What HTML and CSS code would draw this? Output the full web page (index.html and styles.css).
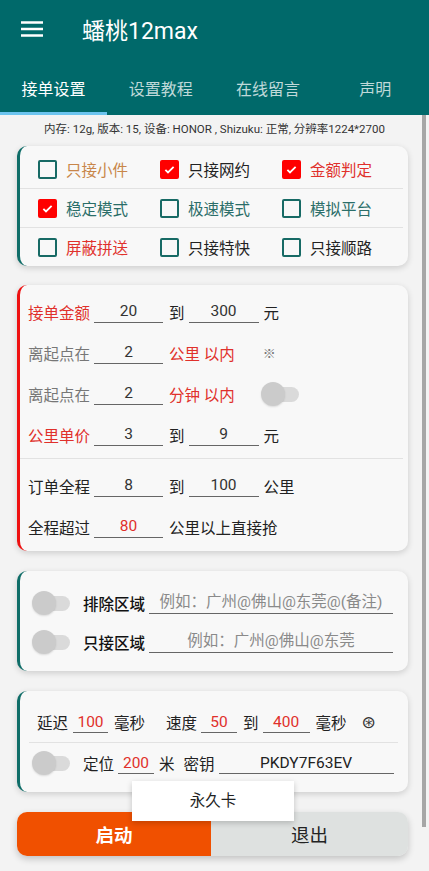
FILE: index.html
```html
<!DOCTYPE html>
<html lang="zh-CN">
<head>
    <meta charset="UTF-8">
    <meta name="viewport" content="width=device-width, initial-scale=1.0">
    <title>蟠桃12max</title>
    <link rel="stylesheet" href="styles.css">
</head>
<body>

<header class="appbar">
    <div class="toolbar">
        <svg class="menu-icon" width="22" height="16" viewBox="0 0 22 16">
            <path d="M0 1.5h22M0 8h22M0 14.5h22" stroke="#fff" stroke-width="2.4"/>
        </svg>
        <span class="title">蟠桃12max</span>
    </div>
    <nav class="tabs">
        <a class="tab active">接单设置</a>
        <a class="tab">设置教程</a>
        <a class="tab">在线留言</a>
        <a class="tab">声明</a>
    </nav>
</header>

<main class="content">
    <p class="info">内存: 12g, 版本: 15, 设备: HONOR , Shizuku: 正常, 分辨率1224*2700</p>

    <!-- 开关选项 -->
    <section class="card card-teal checks">
        <div class="check-row">
            <label class="check"><span class="box"></span><span class="c-orange">只接小件</span></label>
            <label class="check"><span class="box on"></span><span>只接网约</span></label>
            <label class="check"><span class="box on"></span><span class="c-red">金额判定</span></label>
        </div>
        <div class="divider"></div>
        <div class="check-row">
            <label class="check"><span class="box on"></span><span class="c-teal">稳定模式</span></label>
            <label class="check"><span class="box"></span><span class="c-teal">极速模式</span></label>
            <label class="check"><span class="box"></span><span class="c-teal">模拟平台</span></label>
        </div>
        <div class="divider"></div>
        <div class="check-row">
            <label class="check"><span class="box"></span><span class="c-red">屏蔽拼送</span></label>
            <label class="check"><span class="box"></span><span>只接特快</span></label>
            <label class="check"><span class="box"></span><span>只接顺路</span></label>
        </div>
    </section>

    <!-- 金额与距离 -->
    <section class="card card-red ranges">
        <div class="field-row">
            <span class="label c-red">接单金额</span>
            <input class="num" value="20">
            <span class="to">到</span>
            <input class="num num2" value="300">
            <span>元</span>
        </div>
        <div class="field-row">
            <span class="label c-gray">离起点在</span>
            <input class="num" value="2">
            <span class="c-red">公里 以内</span>
            <span class="mark">※</span>
        </div>
        <div class="field-row">
            <span class="label c-gray">离起点在</span>
            <input class="num" value="2">
            <span class="c-red">分钟 以内</span>
            <span class="switch row-switch"><span class="thumb"></span></span>
        </div>
        <div class="field-row">
            <span class="label c-red">公里单价</span>
            <input class="num" value="3">
            <span class="to">到</span>
            <input class="num num2" value="9">
            <span>元</span>
        </div>
        <div class="divider wide"></div>
        <div class="field-row">
            <span class="label">订单全程</span>
            <input class="num" value="8">
            <span class="to">到</span>
            <input class="num num2" value="100">
            <span>公里</span>
        </div>
        <div class="field-row">
            <span class="label">全程超过</span>
            <input class="num red" value="80">
            <span>公里以上直接抢</span>
        </div>
    </section>

    <!-- 区域 -->
    <section class="card card-teal areas">
        <div class="area-row">
            <span class="switch"><span class="thumb"></span></span>
            <span class="area-label">排除区域</span>
            <input class="area-input" placeholder="例如：广州@佛山@东莞@(备注)">
        </div>
        <div class="area-row">
            <span class="switch"><span class="thumb"></span></span>
            <span class="area-label">只接区域</span>
            <input class="area-input" placeholder="例如：广州@佛山@东莞">
        </div>
    </section>

    <!-- 延迟 / 定位 / 密钥 -->
    <section class="card card-teal timing">
        <div class="time-row">
            <span>延迟</span>
            <input class="small red w35 ml5" value="100">
            <span class="ml6">毫秒</span>
            <span class="ml21">速度</span>
            <input class="small red w36 ml4" value="50">
            <span class="ml6">到</span>
            <input class="small red w47 ml4" value="400">
            <span class="ml6">毫秒</span>
            <span class="star">⊛</span>
        </div>
        <div class="divider inner"></div>
        <div class="time-row second">
            <span class="switch"><span class="thumb"></span></span>
            <span class="ml13">定位</span>
            <input class="small red w36 ml4" value="200">
            <span class="ml5">米</span>
            <span class="ml9">密钥</span>
            <input class="small key ml4" value="PKDY7F63EV">
        </div>
        <div class="popup">永久卡</div>
    </section>

    <div class="actions">
        <button class="btn start">启动</button>
        <button class="btn quit">退出</button>
    </div>
</main>

<div class="scrollbar"></div>

</body>
</html>
```

FILE: styles.css
```css
body {
    margin: 0;
    font-family: Roboto, "Noto Sans CJK SC", sans-serif;
    background-color: #f3f3f3;
    color: #222;
    width: 429px;
    height: 871px;
    overflow: hidden;
}
.appbar {
    background: #00696a;
    color: #fff;
}
.toolbar {
    height: 60px;
    display: flex;
    align-items: center;
    padding-left: 21px;
}
.menu-icon {
    margin-top: -3px;
}
.title {
    margin-left: 39px;
    font-size: 23px;
    margin-top: -2px;
}
.tabs {
    display: flex;
    height: 55px;
}
.tab {
    flex: 1;
    display: flex;
    align-items: center;
    justify-content: center;
    font-size: 16px;
    color: rgba(255, 255, 255, 0.75);
    border-bottom: 3px solid transparent;
    padding-top: 3px;
}
.tab.active {
    color: #fff;
    border-bottom-color: #6cc4ef;
}
.content {
    padding: 0 21px 0 17px;
}
.info {
    margin: 6px 0 0;
    font-size: 11.5px;
    line-height: 16px;
    color: #333;
    text-align: center;
    padding-left: 4px;
}
.card {
    position: relative;
    background: #f8f8f8;
    border-radius: 10px;
    box-shadow: 0 2px 6px rgba(0, 0, 0, 0.16);
    border-left: 3px solid #0f6d68;
}
.card-red {
    border-left-color: #ee1111;
}
.divider {
    height: 1px;
    background: #e2e2e2;
    margin: 0 5px 0 0;
}
.c-red { color: #e0302b; }
.c-orange { color: #c8864a; }
.c-teal { color: #2b6e69; }
.c-gray { color: #777; }

/* checkboxes */
.checks {
    margin-top: 9px;
    padding: 4px 0 0;
    height: 116px;
}
.check-row {
    display: grid;
    grid-template-columns: 122px 122px 122px;
    height: 38px;
    padding-left: 18px;
    align-items: center;
}
.check {
    display: flex;
    align-items: center;
    font-size: 15.5px;
}
.box {
    width: 15px;
    height: 15px;
    border: 2.5px solid #176a65;
    border-radius: 2px;
    margin-right: 9px;
}
.box.on {
    border-color: #ff0000;
    background: #ff0000 url("data:image/svg+xml;utf8,<svg xmlns='http://www.w3.org/2000/svg' viewBox='0 0 20 20'><path d='M4.5 10.5l3.5 3.5 7.5-7.5' fill='none' stroke='white' stroke-width='2.4'/></svg>") center/100% no-repeat;
}

/* ranges */
.ranges {
    margin-top: 19px;
    padding: 6px 0 4px;
}
.field-row {
    display: flex;
    align-items: center;
    height: 41px;
    padding-left: 8px;
    font-size: 15.5px;
}
.label {
    width: 62px;
    margin-right: 4px;
}
.num {
    width: 69px;
    height: 21px;
    margin-right: 6px;
    padding: 0;
    border: none;
    border-bottom: 1.5px solid #666;
    background: transparent;
    font: 15.5px Roboto, "Noto Sans CJK SC", sans-serif;
    color: #333;
    text-align: center;
    outline: none;
}
.num2 {
    width: 70px;
    margin-right: 5px;
}
.to {
    margin-right: 4px;
}
.red {
    color: #e0302b;
}
.mark {
    margin-left: 28px;
    font-size: 13px;
    color: #777;
}
.divider.wide {
    margin: 3px 5px 6px 0;
}
.switch {
    position: relative;
    display: inline-block;
    width: 38px;
    height: 24px;
    flex-shrink: 0;
}
.switch::before {
    content: "";
    position: absolute;
    right: 0;
    top: 5px;
    width: 28px;
    height: 15px;
    border-radius: 8px;
    background: #dadada;
}
.thumb {
    position: absolute;
    left: 0;
    top: 0;
    width: 24px;
    height: 24px;
    border-radius: 50%;
    background: #cbcbcb;
    box-shadow: 0 1px 2px rgba(0, 0, 0, 0.12);
}
.row-switch {
    margin-left: 26px;
}

/* areas */
.areas {
    margin-top: 20px;
    padding: 12px 0 10px;
}
.area-row {
    display: flex;
    align-items: center;
    height: 39px;
    padding-left: 12px;
}
.area-label {
    margin-left: 13px;
    width: 62px;
    font-size: 15.5px;
    font-weight: 500;
    color: #111;
}
.area-input {
    margin-left: 4px;
    width: 244px;
    height: 22px;
    padding: 0;
    border: none;
    border-bottom: 1.5px solid #666;
    background: transparent;
    font: 15.5px Roboto, "Noto Sans CJK SC", sans-serif;
    text-align: center;
    outline: none;
}
.area-input::placeholder {
    color: #8a8a8a;
}

/* timing */
.timing {
    margin-top: 20px;
    padding: 11px 0 9px;
}
.time-row {
    display: flex;
    align-items: center;
    height: 40px;
    padding-left: 17px;
    font-size: 15.5px;
}
.time-row.second {
    padding-left: 12px;
}
.divider.inner {
    margin: 0 10px 0 9px;
}
.small {
    height: 21px;
    padding: 0;
    border: none;
    border-bottom: 1.5px solid #666;
    background: transparent;
    font: 15.5px Roboto, "Noto Sans CJK SC", sans-serif;
    text-align: center;
    outline: none;
}
.small.red { color: #e0302b; }
.key {
    width: 175px;
    color: #222;
}
.w35 { width: 35px; }
.w36 { width: 36px; }
.w47 { width: 47px; }
.ml4 { margin-left: 4px; }
.ml5 { margin-left: 5px; }
.ml6 { margin-left: 6px; }
.ml9 { margin-left: 9px; }
.ml13 { margin-left: 13px; }
.ml21 { margin-left: 21px; }
.star {
    margin-left: 15px;
    font-family: "DejaVu Sans", sans-serif;
    font-size: 17px;
    color: #333;
}
.popup {
    position: absolute;
    left: 112px;
    top: 90px;
    width: 162px;
    height: 40px;
    line-height: 40px;
    text-align: center;
    background: #fff;
    font-size: 15.5px;
    color: #222;
    box-shadow: 0 2px 6px rgba(0, 0, 0, 0.2);
    z-index: 2;
}

/* buttons */
.actions {
    display: flex;
    margin-top: 20px;
    height: 44px;
    border-radius: 10px;
    overflow: hidden;
    box-shadow: 0 3px 7px rgba(0, 0, 0, 0.2);
}
.btn {
    border: none;
    font-family: Roboto, "Noto Sans CJK SC", sans-serif;
    font-size: 18.5px;
    cursor: pointer;
}
.start {
    width: 194px;
    background-color: #f05000;
    color: #fff;
    font-weight: bold;
}
.quit {
    flex: 1;
    background-color: #dee1e0;
    color: #222;
}
.scrollbar {
    position: fixed;
    right: 3px;
    top: 115px;
    width: 4px;
    height: 712px;
    background: #a6a6a6;
}
```
